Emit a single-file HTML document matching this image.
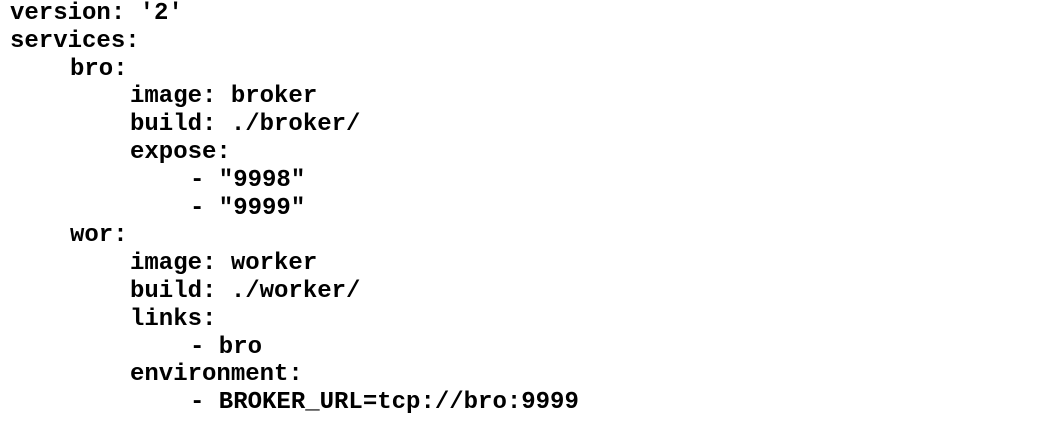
<!DOCTYPE html>
<html><head><meta charset="utf-8"><style>
html,body{margin:0;padding:0;background:#fff;width:1064px;height:422px;overflow:hidden}
.c{position:absolute;left:10px;top:0px;font-family:"Liberation Mono","Courier New",monospace;font-weight:bold;font-size:24px;line-height:27.8px;color:#000}
.c div{height:27.8px;white-space:pre}
.l1{padding-left:60px}.l2{padding-left:120px}.l3{padding-left:180px}
</style></head><body><div class="c"><div>version: '2'</div><div>services:</div><div class="l1">bro:</div><div class="l2">image: broker</div><div class="l2">build: ./broker/</div><div class="l2">expose:</div><div class="l3">- "9998"</div><div class="l3">- "9999"</div><div class="l1">wor:</div><div class="l2">image: worker</div><div class="l2">build: ./worker/</div><div class="l2">links:</div><div class="l3">- bro</div><div class="l2">environment:</div><div class="l3">- BROKER_URL=tcp://bro:9999</div></div></body></html>
